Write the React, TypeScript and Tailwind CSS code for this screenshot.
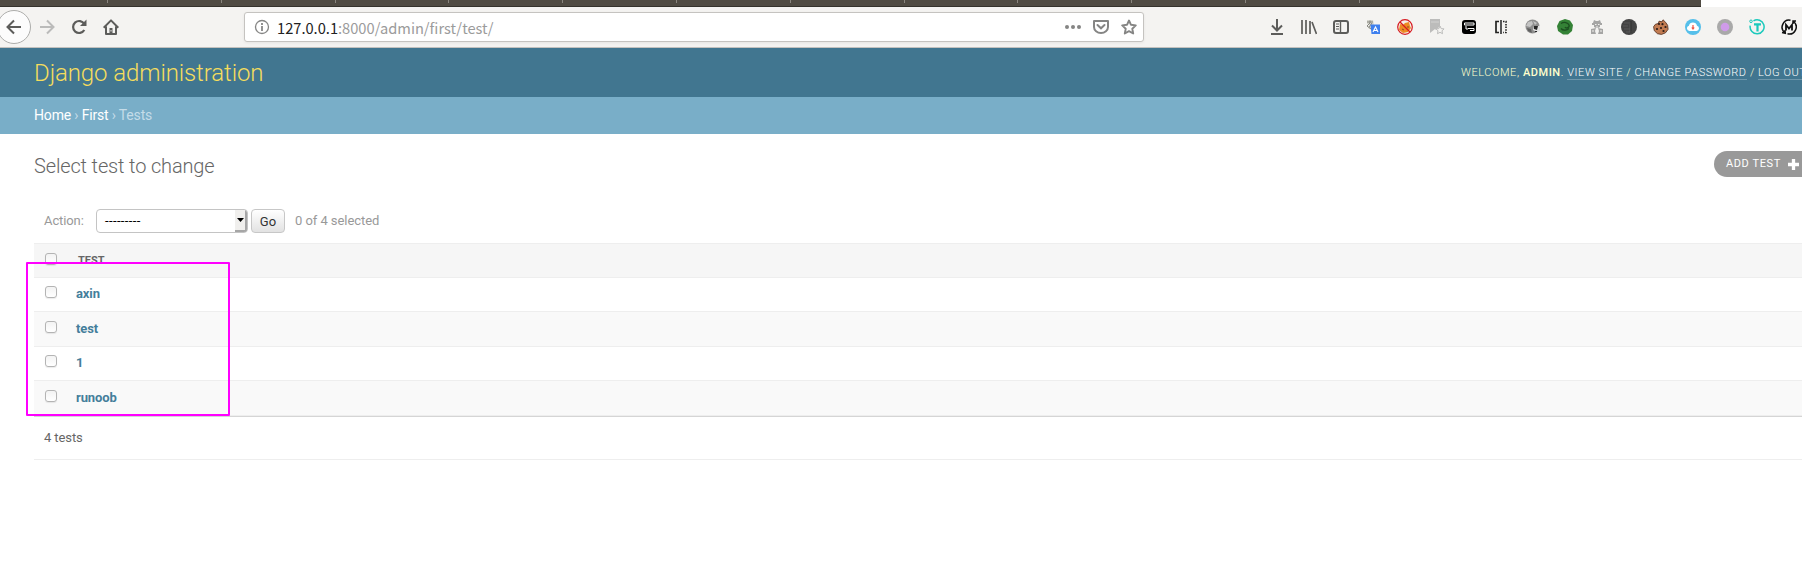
import type { ReactNode } from "react";

const Icon = ({ children }: { children: ReactNode }) => (
  <svg className="block h-4 w-4 shrink-0" viewBox="0 0 16 16" fill="none" stroke="#5c5c5a" strokeWidth="2">
    {children}
  </svg>
);

const TabStrip = () => (
  <div className="flex h-[7px] w-[1701px] overflow-hidden border-b border-[#35322c] bg-[#504b43] pl-[107px]">
    {Array.from({ length: 14 }, (_, i) => (
      <div key={i} className="h-[3px] w-[113.8px] shrink-0 border-l border-[#8a867f]" />
    ))}
  </div>
);

const Extensions = () => (
  <div className="ml-[125px] flex shrink-0 items-center gap-4">
    <Icon><path d="M8 0v11M3 6.5l5 5 5-5M2 15h12" /></Icon>
    <Icon><path d="M1 1v14M5 1v14M9 2v13M11 3l4.5 12" strokeWidth="1.7" /></Icon>
    <Icon><rect x="1" y="2" width="14" height="12" rx="2" /><path d="M7.5 2v12" strokeWidth="1.4" /><path d="M3 5h3M3 7.5h3M3 10h3" strokeWidth="1" /></Icon>
    <Icon>
      <path d="M2 1h6l1 5-4 4-2-1 2-3-3-1z" fill="#d5d5cd" stroke="none" />
      <path d="M2 3h6M5 1.5V4l-3 3 4 3M7 4L4 8" stroke="#85857e" strokeWidth="1" />
      <path d="M5.500 5.500H15V15H6.500z" fill="#3f80ee" stroke="none" />
      <path d="M8 13l2.500-5L13 13M9 11.500h3" stroke="#fff" strokeWidth="1.100" />
    </Icon>
    <Icon>
      <circle cx="8" cy="8" r="7.500" fill="#f4eeea" stroke="none" />
      <path d="M3 5l3 1 2-2 4-1 1 4 1 2-3 4-5 1-4-3z" fill="#ed8a23" stroke="none" />
      <path d="M5 10l2 1M11 7v2" stroke="#8e4921" strokeWidth="1" />
      <circle cx="8" cy="8" r="7.300" stroke="#d71920" strokeWidth="1.200" />
      <path d="M3 3l10 10" stroke="#d71920" strokeWidth="1.200" />
    </Icon>
    <Icon>
      <path d="M1 0h10v7l-2 2-2 2-1-1-5 4z" fill="#bcbcbb" stroke="none" />
      <path d="M2 3h8" stroke="#d3d3d2" strokeWidth="1" />
      <path d="M11 7l1.200 2.600 2.800.3-2 2 .5 2.800-2.500-1.400-2.500 1.400.5-2.800-2-2 2.800-.3z" fill="#f4f3f1" stroke="#bcbcbb" strokeWidth="1" />
    </Icon>
    <Icon>
      <rect x="1" y="1" width="14" height="14" rx="3" fill="#000" stroke="none" />
      <path d="M3.500 4h9.500v2H3.500zM7 9.500h6v2H9" stroke="#fff" strokeWidth="1" />
      <path d="M5 7v3h2" stroke="#fff" strokeWidth="1" />
    </Icon>
    <Icon>
      <path d="M6 2.500H3v11h3" stroke="#222" strokeWidth="1.700" />
      <path d="M8 1v14" stroke="#222" strokeWidth="1.500" />
      <path d="M10 2.500h3v11h-3" stroke="#222" strokeWidth="1.600" strokeDasharray="1.5 1.2" />
    </Icon>
    <Icon>
      <circle cx="7.500" cy="7.500" r="7" fill="#8e8e8e" stroke="none" />
      <path d="M3 3l4-1 1 3-3 3-4-1zM8 2l4 2-2 2z" fill="#c4c4c4" stroke="none" />
      <path d="M2 9l4 1 1 4-4-2z" fill="#616161" stroke="none" />
      <path d="M9 7l6 0v5l-3 1-4-2z" fill="#e4e4e4" stroke="none" />
      <path d="M9 7l4 0-1 4-3-1zM10 12h2v1h-2z" fill="#262626" stroke="none" />
    </Icon>
    <Icon>
      <path d="M8 0l5 1.500 3 4.500-1 6-4 3.500H6L1 12 0 7l2.500-5z" fill="#348236" stroke="none" />
      <path d="M4 4.500c3-2 7-1 8 1.500s-3 4-4 2M4 9.500c2 2.500 6 2 8 0" stroke="#1c4f20" strokeWidth="1.300" />
    </Icon>
    <Icon>
      <path d="M5 1l2 1h2l2-1 1 3h1v2h-2v2l-2 1H7L5 8V6H3V4h1zM2 10l5-1-1 3 1 3H2zM9 9l5 1v5H9l1-3z" fill="#a5a5a4" stroke="none" />
      <path d="M6 5.500h1.500M9 5.500h1.500M3 12h2M11 12h2M7 8h2" stroke="#f1f0ee" strokeWidth="1" />
    </Icon>
    <Icon>
      <circle cx="8" cy="8" r="8" fill="#444" stroke="none" />
      <path d="M3 4h5M2 7h5M3 10h6M5 13h6M9 3v10" stroke="#5e5e5e" strokeWidth=".8" />
      <path d="M10 2v12" stroke="#303030" strokeWidth="1" />
    </Icon>
    <Icon>
      <path d="M6 .8l1 2 3-.6.6 2.300 3 .8 1.800 2.400-.7 4-3.200 3-4 .7-4-1.600-2.600-3.500.5-4 2-3z" transform="matrix(-1 0 0 1 16 0)" fill="#c27b51" stroke="#5d3928" strokeWidth=".9" />
      <g fill="#291b17" stroke="none"><circle cx="6" cy="5" r="1.100" /><circle cx="9.500" cy="5.200" r="1.100" /><circle cx="12.500" cy="8" r="1.100" /><circle cx="8" cy="9" r="1.100" /><circle cx="4" cy="10" r="1.100" /><circle cx="10.500" cy="12" r="1.100" /></g>
    </Icon>
    <Icon>
      <circle cx="8" cy="8" r="8" fill="#55bfea" stroke="none" />
      <path d="M4.500 12a2.700 2.700 0 01-.6-5.300 4.200 4.200 0 018.100 0 2.700 2.700 0 01-.5 5.300z" fill="#fff" stroke="none" />
      <path d="M8 6v4M6.800 8.500L8 10l1.200-1.500" stroke="#ef5542" strokeWidth="1.200" />
    </Icon>
    <Icon><circle cx="8" cy="8" r="8" fill="#a9a9a9" stroke="none" /><circle cx="8" cy="8" r="4.300" fill="#cf9be9" stroke="none" /></Icon>
    <Icon>
      <path d="M4.500 1.800a7 7 0 11-3.300 4.800" stroke="#1bc9bc" strokeWidth="1.500" />
      <circle cx="2" cy="2.300" r="1.300" stroke="#1bc9bc" strokeWidth="1" />
      <path d="M5 5.400h7M8.500 5v7.500" stroke="#1bc9bc" strokeWidth="2.200" />
    </Icon>
    <Icon>
      <path d="M4 13.800A7 7 0 019.500 1.300M12.500 2.500A7 7 0 016.500 14.800M1 13.500l3.300.7L4 11M12 5V2h3" stroke="#111" strokeWidth="1.500" />
      <path d="M5 11.500V5.800l3 3.700 3-3.700v5.700" stroke="#111" strokeWidth="1.800" />
    </Icon>
  </div>
);

const Toolbar = () => (
  <div className="flex h-[41px] items-center overflow-hidden border-b border-[#c3c1be] bg-[#f4f3f1]">
    <div className="-ml-[3px] flex h-[34px] w-[34px] shrink-0 items-center justify-center rounded-full border border-[#adadab] bg-[#fcfcfc]">
      <Icon><path d="M15 8H2M8 1.5L1.5 8 8 14.5" /></Icon>
    </div>
    <div className="ml-2 flex gap-4">
      <Icon><path d="M1 8h13M8 1.5L14.500 8 8 14.500" stroke="#bbbbba" /></Icon>
      <Icon><path d="M13.300 5A6 6 0 1013.300 11" strokeWidth="2.200" /><path d="M15.500 .5v6.500h-6.500z" fill="#5c5c5a" stroke="none" /></Icon>
      <Icon><path d="M.7 8.700L8 1.400l7.300 7.300M3 7.500V15h10V7.500" strokeLinejoin="round" /><path d="M6.500 9h3v5h-3z" fill="#5c5c5a" stroke="none" /><path d="M8 11v1.500" stroke="#f4f3f1" strokeWidth="1" /></Icon>
    </div>
    <div className="ml-[125px] flex h-[30px] w-[900px] shrink-0 items-center rounded-[3px] border border-[#c5c3c0] bg-white pr-[6px] pl-[9px] shadow-[0_1px_3px_rgba(0,0,0,0.06)]">
      <Icon><circle cx="8" cy="8" r="6.500" stroke="#858584" strokeWidth="1.300" /><path d="M8 7v5M8 4v2" stroke="#777" strokeWidth="1.600" /></Icon>
      <div className="ml-[7px] flex-1 pt-[2px] font-['Noto_Sans_CJK_SC',sans-serif] text-[14.67px] leading-6 text-[#9b9b9b]"><span className="text-[#222]">127.0.0.1</span>:8000/admin/first/test/</div>
      <div className="flex gap-3">
        <Icon><g fill="#858584" stroke="none"><circle cx="2" cy="8" r="2" /><circle cx="8" cy="8" r="2" /><circle cx="14" cy="8" r="2" /></g></Icon>
        <Icon><path d="M1 2h14v6a7 6 0 01-14 0z" stroke="#858584" strokeLinejoin="round" /><path d="M4.500 6L8 9.300 11.500 6" stroke="#858584" strokeLinecap="round" /></Icon>
        <Icon><path d="M8 1.500l2 4.300 4.800.6-3.500 3.300.9 4.800L8 12.200l-4.200 2.300.9-4.800L1.200 6.400 6 5.800z" stroke="#858584" strokeWidth="1.900" strokeLinejoin="round" /></Icon>
      </div>
    </div>
    <Extensions />
  </div>
);

const Check = () => (
  <span className="h-3 w-3 shrink-0 rounded-[3px] border border-[#b4b4b4] bg-gradient-to-b from-[#f3f3f3] to-white shadow-[0_1px_1px_rgba(0,0,0,0.08)]" />
);

const rows = [
  { name: "axin", style: "h-[34px] bg-white pb-px" },
  { name: "test", style: "h-[35px] bg-[#f9f9f9]" },
  { name: "1", style: "h-[34px] bg-white pb-px" },
  { name: "runoob", style: "h-[35px] bg-[#f9f9f9]" },
];

export default function App() {
  return (
    <div className="relative h-[570px] w-[1802px] overflow-hidden bg-white font-[Roboto,sans-serif] text-[13px] text-[#666]">
      <TabStrip />
      <Toolbar />
      <header className="flex h-[49px] items-center bg-[#417690] pl-[34px] whitespace-nowrap">
        <h1 className="w-[1427px] shrink-0 text-2xl leading-7 font-light tracking-[-0.1px] text-[#f5dd5d]">Django administration</h1>
        <div className="shrink-0 text-[11px] leading-[14px] font-light tracking-[0.57px] text-[#ffc]">
          WELCOME, <strong className="font-medium">ADMIN</strong>. <span className="border-b border-white/25 text-white">VIEW SITE</span> / <span className="border-b border-white/25 text-white">CHANGE PASSWORD</span> / <span className="border-b border-white/25 text-white">LOG OUT</span>
        </div>
      </header>
      <nav className="flex h-[37px] items-center bg-[#79aec8] pb-[2px] pl-[34px] text-sm tracking-[-0.17px] whitespace-pre text-[#c4dce8]">
        <span className="text-white">Home</span> › <span className="text-white">First</span> › Tests
      </nav>
      <main className="pl-[34px]">
        <div className="flex h-[74px] items-start pt-[17px]">
          <h2 className="mt-[3px] w-[1680px] shrink-0 text-xl leading-6 font-light tracking-[-0.15px] text-[#666]">Select test to change</h2>
          <button className="flex h-[26px] w-[104px] shrink-0 items-center gap-[7px] rounded-full bg-[#999] pl-3 text-[11px] tracking-[0.6px] whitespace-nowrap text-white">
            <span className="pt-px">ADD TEST</span>
            <svg className="h-[11px] w-[11px] shrink-0" viewBox="0 0 10 10"><path d="M3.500 0h3v3.500H10v3H6.500V10h-3V6.500H0v-3h3.500z" fill="white" /></svg>
          </button>
        </div>
        <div className="flex h-[35px] items-start pt-px pl-[10px] leading-6 text-[#999]">
          <span className="w-[52px] tracking-[-0.1px]">Action:</span>
          <div className="flex h-6 w-[152px] items-center overflow-hidden rounded-[4px] border border-[#c4c4c4] bg-white pl-2 text-black">
            <span className="flex-1 tracking-[0.37px]">---------</span>
            <span className="flex h-[22px] w-3 items-center justify-center border-r-2 border-b-2 border-[#a6a6a6] bg-[#f0efed]">
              <svg className="h-[4px] w-[7px] shrink-0" viewBox="0 0 7 4"><path d="M0 0h7L3.500 4z" fill="black" /></svg>
            </span>
          </div>
          <button className="ml-[3px] h-6 w-[34px] rounded-[4px] border border-[#c7c7c7] bg-gradient-to-b from-white to-[#e2e2e2] leading-[21px] text-[#333]">Go</button>
          <span className="ml-[10px] tracking-[-0.06px]">0 of 4 selected</span>
        </div>
        <div className="flex h-[35px] items-center border-y border-[#eee] bg-[#f6f6f6] pl-[11px] text-[11px] font-bold">
          <span className="flex -translate-y-[2px]"><Check /></span><span className="ml-[21px] pt-[2px]">TEST</span>
        </div>
        {rows.map((row) => (
          <div key={row.name} className={`flex items-center border-b border-[#eee] pl-[11px] ${row.style}`}>
            <span className="flex -translate-y-[2px]"><Check /></span><span className="ml-[19px] font-bold tracking-[-0.1px] text-[#447e9b]">{row.name}</span>
          </div>
        ))}
        <footer className="flex h-[44px] items-center border-t border-b border-t-[#d5d5d5] border-b-[#eee] pl-[10px] tracking-[-0.1px]">4 tests</footer>
      </main>
      <div className="pointer-events-none absolute top-[262px] left-[26px] h-[154px] w-[204px] rounded-[1px] border-2 border-[#f0f]" />
    </div>
  );
}
